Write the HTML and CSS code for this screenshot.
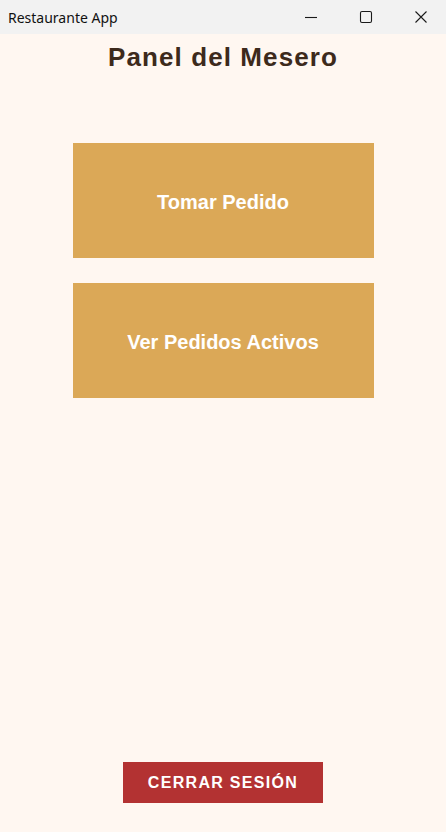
FILE: index.html
```html
<!DOCTYPE html>
<html lang="es">
<head>
<meta charset="utf-8">
<title>Restaurante App</title>
<link rel="stylesheet" href="styles.css">
</head>
<body>
<div class="window">
  <header class="titlebar">
    <span class="app-name">Restaurante App</span>
    <div class="controls">
      <span class="ctrl"><svg width="14" height="14" viewBox="0 0 14 14"><path d="M1 7.5h12" stroke="#1a1a1a" stroke-width="1.1" fill="none"/></svg></span>
      <span class="ctrl"><svg width="14" height="14" viewBox="0 0 14 14"><rect x="1.5" y="1.5" width="11" height="11" rx="1.5" stroke="#1a1a1a" stroke-width="1.1" fill="none"/></svg></span>
      <span class="ctrl"><svg width="14" height="14" viewBox="0 0 14 14"><path d="M1.5 1.5l11 11M12.5 1.5l-11 11" stroke="#1a1a1a" stroke-width="1.1" fill="none"/></svg></span>
    </div>
  </header>
  <main class="panel">
    <h1 class="title">Panel del Mesero</h1>
    <div class="actions">
      <button class="action">Tomar Pedido</button>
      <button class="action">Ver Pedidos Activos</button>
    </div>
    <button class="logout">CERRAR SESIÓN</button>
  </main>
</div>
</body>
</html>
```
FILE: styles.css
```css
html, body {
  margin: 0;
  padding: 0;
}
body {
  width: 446px;
  height: 832px;
  overflow: hidden;
  background: #fff7f1;
}
.window {
  display: flex;
  flex-direction: column;
  height: 832px;
}
.titlebar {
  height: 34px;
  flex: 0 0 34px;
  background: #f2f2f2;
  display: flex;
  align-items: center;
  justify-content: space-between;
}
.app-name {
  font-family: "Noto Sans", "Open Sans", sans-serif;
  font-size: 14px;
  color: #111;
  padding-left: 8px;
}
.controls {
  display: flex;
  height: 100%;
  margin-right: -2px;
}
.ctrl {
  width: 55px;
  display: flex;
  align-items: center;
  justify-content: center;
}
.panel {
  flex: 1;
  display: flex;
  flex-direction: column;
  align-items: center;
  padding-top: 8px;
  padding-bottom: 29px;
}
.title {
  margin: 0;
  font-family: "Liberation Sans", Arial, sans-serif;
  font-weight: bold;
  font-size: 26px;
  line-height: 30px;
  letter-spacing: 1.1px;
  color: #3d2a1c;
}
.actions {
  margin-top: 71px;
  display: flex;
  flex-direction: column;
  gap: 25px;
}
.action {
  width: 301px;
  height: 115px;
  border: none;
  background: #dba857;
  color: #fff;
  font-family: "Liberation Sans", Arial, sans-serif;
  font-weight: bold;
  font-size: 20px;
  padding: 3px 0 0;
  cursor: pointer;
}
.logout {
  margin-top: auto;
  width: 200px;
  height: 41px;
  border: none;
  background: #b33232;
  color: #fff;
  font-family: "Liberation Sans", Arial, sans-serif;
  font-weight: bold;
  font-size: 16px;
  letter-spacing: 1.3px;
  padding: 1px 0 0;
  cursor: pointer;
}
```
